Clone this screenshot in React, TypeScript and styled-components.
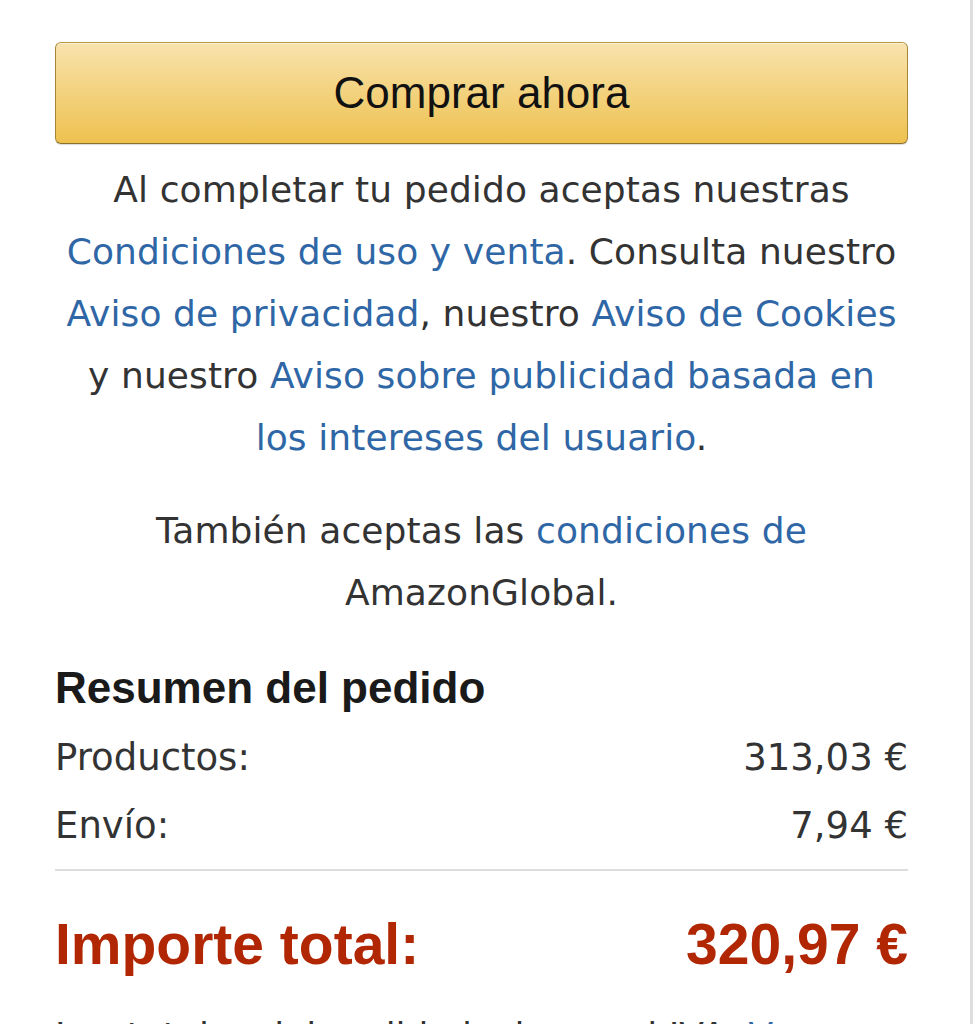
import React from 'react';
import styled, { createGlobalStyle } from 'styled-components';

const GlobalStyle = createGlobalStyle`
  html, body {
    margin: 0;
    padding: 0;
    background: #ffffff;
  }
  * {
    box-sizing: border-box;
  }
`;

const Column = styled.div`
  width: 973px;
  min-height: 1100px;
  padding: 42px 62px 0 55px;
  border-right: 3px solid #dedede;
  font-family: 'DejaVu Sans', Verdana, sans-serif;
  color: #333333;
`;

const BuyButton = styled.button`
  display: block;
  width: 100%;
  height: 102px;
  border: 1px solid #a88734;
  border-color: #b8963e #a88734 #8d7029;
  border-radius: 6px;
  background: linear-gradient(to bottom, #f8e3ad, #eec14f);
  box-shadow: inset 0 1px 0 rgba(255, 255, 255, 0.5), 0 1px 1px rgba(0, 0, 0, 0.15);
  font-family: 'Liberation Sans', Arial, sans-serif;
  font-size: 44px;
  color: #111111;
  cursor: pointer;
`;

const Legal = styled.p<{ $gap: number }>`
  margin: ${p => p.$gap}px 0 0;
  padding: 0 8px;
  font-size: 36px;
  letter-spacing: 0.1px;
  line-height: 62px;
  text-align: center;
  color: #333333;
`;

const Link = styled.a`
  color: #2f67a6;
  text-decoration: none;
`;

const SummaryTitle = styled.h3`
  margin: 38px 0 0;
  font-family: 'Liberation Sans', Arial, sans-serif;
  font-size: 44px;
  font-weight: 700;
  line-height: 52px;
  padding-bottom: 9px;
  color: #1a1a1a;
`;

const Row = styled.div`
  display: flex;
  justify-content: space-between;
  align-items: center;
  height: 68px;
  font-size: 37px;
  color: #333333;
`;

const Divider = styled.hr`
  margin: 10px 0 0;
  border: none;
  border-top: 2px solid #dddddd;
`;

const TotalRow = styled.div`
  display: flex;
  justify-content: space-between;
  align-items: center;
  height: 70px;
  margin-top: 38px;
  font-family: 'Liberation Sans', Arial, sans-serif;
  font-size: 57px;
  font-weight: 700;
  color: #b12704;
`;

const Note = styled.p`
  margin: 26px 0 0;
  font-size: 36px;
  line-height: 62px;
  color: #333333;
`;

const App: React.FC = () => {
  return (
    <>
      <GlobalStyle />
      <Column>
        <BuyButton>Comprar ahora</BuyButton>
        <Legal $gap={15}>
          Al completar tu pedido aceptas nuestras{' '}
          <Link href="#">Condiciones de uso y venta</Link>. Consulta nuestro{' '}
          <Link href="#">Aviso de privacidad</Link>, nuestro{' '}
          <Link href="#">Aviso de Cookies</Link> y nuestro{' '}
          <Link href="#">Aviso sobre publicidad basada en los intereses del usuario</Link>.
        </Legal>
        <Legal $gap={31}>
          También aceptas las <Link href="#">condiciones de</Link> AmazonGlobal.
        </Legal>
        <SummaryTitle>Resumen del pedido</SummaryTitle>
        <Row>
          <span>Productos:</span>
          <span>313,03 €</span>
        </Row>
        <Row>
          <span>Envío:</span>
          <span>7,94 €</span>
        </Row>
        <Divider />
        <TotalRow>
          <span>Importe total:</span>
          <span>320,97 €</span>
        </TotalRow>
        <Note>
          Los totales del pedido incluyen el IVA. <Link href="#">Ver detalles</Link>
        </Note>
      </Column>
    </>
  );
};

export default App;
